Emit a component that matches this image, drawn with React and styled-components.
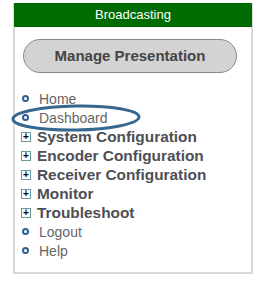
import styled, { createGlobalStyle } from "styled-components";

const GlobalStyle = createGlobalStyle`
  body {
    margin: 0;
    background: #fff;
    font-family: Arial, "Liberation Sans", sans-serif;
  }
`;

const menu = [
  { label: "Home", type: "link" },
  { label: "Dashboard", type: "link" },
  { label: "System Configuration", type: "group" },
  { label: "Encoder Configuration", type: "group" },
  { label: "Receiver Configuration", type: "group" },
  { label: "Monitor", type: "group" },
  { label: "Troubleshoot", type: "group" },
  { label: "Logout", type: "link" },
  { label: "Help", type: "link" },
];

function SideMenu() {
  return (
    <Panel>
      <GlobalStyle />
      <Header>Broadcasting</Header>
      <ManageButton>Manage Presentation</ManageButton>
      <MenuList>
        {menu.map((item) => (
          <MenuItem key={item.label} $group={item.type === "group"}>
            {item.type === "group" ? <PlusBox>+</PlusBox> : <Bullet />}
            <span>{item.label}</span>
          </MenuItem>
        ))}
      </MenuList>
      {/* hand-drawn highlight round "Dashboard" */}
      <Highlight width="132" height="30" viewBox="0 0 132 30">
        <ellipse cx="66" cy="15" rx="63" ry="12" fill="none" stroke="#36678f" strokeWidth="3" transform="rotate(-1 66 15)" />
      </Highlight>
    </Panel>
  );
}

const Panel = styled.div`
  position: relative;
  box-sizing: border-box;
  width: 240px;
  height: 271px;
  margin: 3px 0 0 13px;
  border: 2px solid #d9d9d9;
  border-top: none;
`;

const Header = styled.div`
  height: 24px;
  margin: 0 -1px 0 -1px;
  background: #006b00;
  color: #fff;
  font-size: 13px;
  line-height: 24px;
  text-align: center;
`;

const ManageButton = styled.div`
  box-sizing: border-box;
  width: 214px;
  height: 34px;
  margin: 12px 0 0 8px;
  background: #d3d3d3;
  border: 1px solid #8a8a8a;
  border-radius: 17px;
  color: #444;
  font-size: 15px;
  font-weight: bold;
  line-height: 32px;
  text-align: center;
`;

const MenuList = styled.ul`
  list-style: none;
  margin: 16px 0 0 0;
  padding: 0;
`;

const MenuItem = styled.li`
  display: flex;
  align-items: center;
  height: 19px;
  padding-left: ${(p) => (p.$group ? "6px" : "7px")};
  color: ${(p) => (p.$group ? "#4e4e55" : "#666")};
  font-size: ${(p) => (p.$group ? "15.4px" : "14px")};
  font-weight: ${(p) => (p.$group ? "bold" : "normal")};

  span {
    margin-left: ${(p) => (p.$group ? "6px" : "10px")};
  }
`;

const Bullet = styled.i`
  box-sizing: border-box;
  width: 7px;
  height: 7px;
  border: 2px solid #2e5f8f;
  border-radius: 50%;
`;

const PlusBox = styled.i`
  box-sizing: border-box;
  display: flex;
  align-items: center;
  justify-content: center;
  width: 10px;
  height: 10px;
  border: 1px solid #6f9898;
  color: #000;
  font-style: normal;
  font-weight: bold;
  font-size: 10px;
  line-height: 1;
`;

const Highlight = styled.svg`
  position: absolute;
  left: -5px;
  top: 100px;
  pointer-events: none;
`;

export default function App() {
  return <SideMenu />;
}
